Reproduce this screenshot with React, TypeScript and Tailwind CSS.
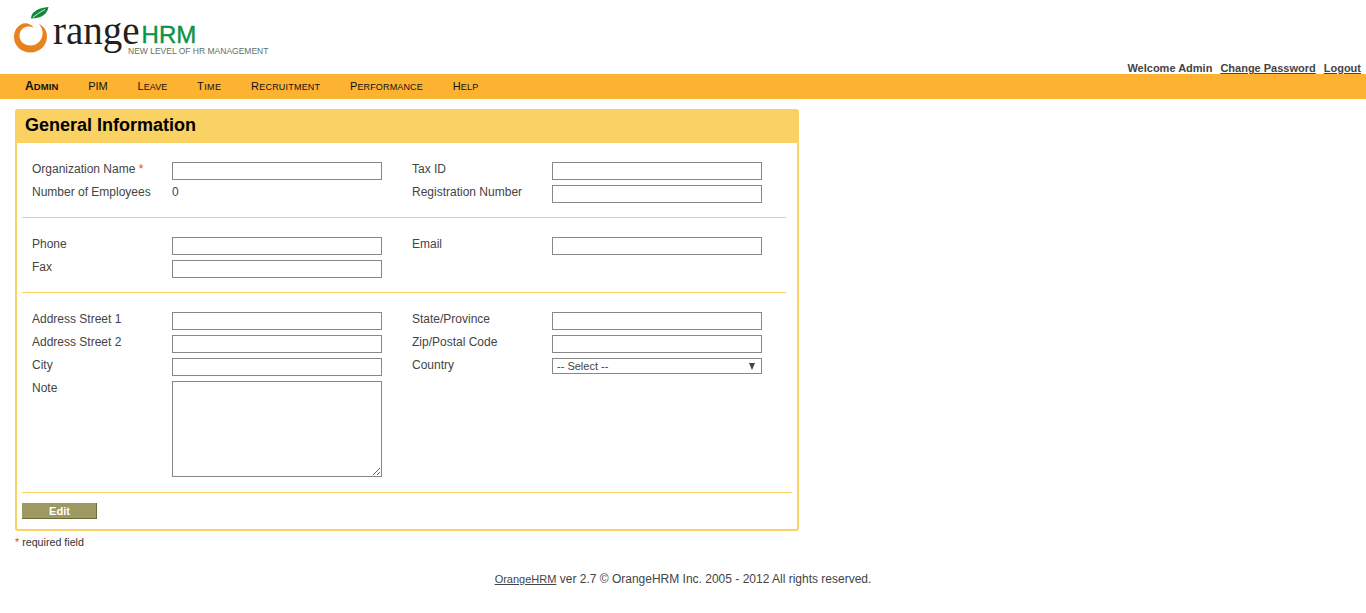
const sans = "font-['Liberation_Sans',Arial,sans-serif]";

const navItems = [
  { name: 'Admin', style: 'font-bold uppercase text-[9.5px] first-letter:text-[12px] tracking-[0.1px]' },
  { name: 'PIM', style: 'text-[11px]' },
  { name: 'Leave', style: 'uppercase text-[9px] first-letter:text-[11px] tracking-[0.1px]' },
  { name: 'Time', style: 'uppercase text-[9px] first-letter:text-[11px] tracking-[0.4px]' },
  { name: 'Recruitment', style: 'uppercase text-[9px] first-letter:text-[11px] tracking-[0.2px]' },
  { name: 'Performance', style: 'uppercase text-[9px] first-letter:text-[11px] tracking-[0.15px]' },
  { name: 'Help', style: 'uppercase text-[9px] first-letter:text-[11px] tracking-[0.25px]' },
];

const Logo = () => {
  return (
    <div className="flex pl-[14px] pt-[7px]">
      <svg width="36" height="48" viewBox="14 7 36 48" className="shrink-0">
        <path
          fill="#e8821e"
          fillRule="evenodd"
          d="M23 23.500C17.500 25.500 14 30.500 14 37c0 9 7.500 15.500 16.500 15.500S47 45.500 47 36.500c0-6-3.500-10.500-8-12.500 2.500 3 4 6.500 3.500 10.500-.6 6-5.500 11-12 11S19.500 41 19.500 36c0-5.500 4-9.500 9-9.500 2 0 4 .5 5.500 1.500-2-2.500-5.500-5.500-11-4.500z"
        />
        <path fill="#0f8a3c" d="M31 18.500C31 12 38 8 48.500 7 47.500 13 43 18.500 31 18.500z" />
        <path fill="none" stroke="#fff" strokeWidth="0.8" d="M33 17.500c4-3.500 8-6 12-8" />
      </svg>
      <div className="flex flex-col pl-[3px]">
        <div className="flex items-baseline mt-[6px] h-[33px]">
          <span className="font-['Liberation_Serif',serif] text-[39px] leading-[33px] text-[#231f20] translate-y-[1px]">range</span>
          <span className={`${sans} text-[24px] leading-[33px] text-[#0d9345] ml-[2px] [-webkit-text-stroke:0.4px_#0d9345]`}>
            HRM
          </span>
        </div>
        <span className={`${sans} text-[8.5px] leading-[10px] text-[#5f6f66] ml-[75px] whitespace-nowrap`}>
          NEW LEVEL OF HR MANAGEMENT
        </span>
      </div>
    </div>
  );
};

const Label = ({ text, required }: { text: string; required?: boolean }) => {
  return (
    <span className="w-[140px] shrink-0 text-[12px] leading-[14px] text-[#444]">
      {text}
      {required && <span className="text-[#e8433a]"> *</span>}
    </span>
  );
};

const TextInput = () => {
  return <input type="text" className="w-[210px] h-[18px] border border-[#888] bg-white" />;
};

const Row = ({ children }: { children: React.ReactNode }) => {
  return <div className="flex h-[18px] mb-[5px] last:mb-0">{children}</div>;
};

const Column = ({ children }: { children: React.ReactNode }) => {
  return <div className="w-[380px] shrink-0 flex flex-col">{children}</div>;
};

const Divider = ({ wide }: { wide?: boolean }) => {
  return <div className={`h-px ml-[5px] bg-[#fad163] ${wide ? 'w-[770px]' : 'w-[764px]'}`} />;
};

const App = () => {
  return (
    <div className={`${sans} w-full h-[613px] bg-white overflow-hidden`}>
      <header className="flex justify-between h-[74px]">
        <Logo />
        <div className="flex items-end gap-[8px] pr-[5px] text-[11px] font-bold leading-[13px] text-[#444] translate-y-[1px]">
          <span>Welcome Admin</span>
          <a className="underline">Change Password</a>
          <a className="underline">Logout</a>
        </div>
      </header>

      <nav className="flex items-center h-[25px] pl-[25px] pb-[1px] gap-[29.7px] bg-[#fdb231] text-[#111]">
        {navItems.map((item) => (
          <span key={item.name} className={item.style}>
            {item.name}
          </span>
        ))}
      </nav>

      <main className="w-[784px] ml-[15px] mt-[10px] border-2 border-[#fad163] rounded-[3px] bg-white">
        <div className="flex items-center h-[33px] -mt-px pl-[8px] pb-[3px] bg-[#fad163] text-[18px] font-bold text-black">
          General Information
        </div>

        <section className="flex pl-[15px] pt-[19px] pb-[14px]">
          <Column>
            <Row>
              <Label text="Organization Name" required />
              <TextInput />
            </Row>
            <Row>
              <Label text="Number of Employees" />
              <span className="text-[12px] leading-[14px] text-[#444]">0</span>
            </Row>
          </Column>
          <Column>
            <Row>
              <Label text="Tax ID" />
              <TextInput />
            </Row>
            <Row>
              <Label text="Registration Number" />
              <TextInput />
            </Row>
          </Column>
        </section>
        <Divider />

        <section className="flex pl-[15px] pt-[19px] pb-[14px]">
          <Column>
            <Row>
              <Label text="Phone" />
              <TextInput />
            </Row>
            <Row>
              <Label text="Fax" />
              <TextInput />
            </Row>
          </Column>
          <Column>
            <Row>
              <Label text="Email" />
              <TextInput />
            </Row>
          </Column>
        </section>
        <Divider />

        <section className="flex pl-[15px] pt-[19px] pb-[15px]">
          <Column>
            <Row>
              <Label text="Address Street 1" />
              <TextInput />
            </Row>
            <Row>
              <Label text="Address Street 2" />
              <TextInput />
            </Row>
            <Row>
              <Label text="City" />
              <TextInput />
            </Row>
            <div className="flex">
              <Label text="Note" />
              <textarea className="block w-[210px] h-[96px] border border-[#888] bg-white" />
            </div>
          </Column>
          <Column>
            <Row>
              <Label text="State/Province" />
              <TextInput />
            </Row>
            <Row>
              <Label text="Zip/Postal Code" />
              <TextInput />
            </Row>
            <Row>
              <Label text="Country" />
              <div className="relative w-[210px] h-[16px]">
                <select className="block w-full h-full appearance-none border border-[#888] bg-white pl-[4px] text-[11px] leading-[14px] text-[#444]">
                  <option>-- Select --</option>
                </select>
                <span className="absolute right-[7px] top-[5px] w-0 h-0 border-x-[3.5px] border-x-transparent border-t-[7px] border-t-[#444]" />
              </div>
            </Row>
          </Column>
        </section>
        <Divider wide />

        <div className="pl-[5px] pt-[10px] pb-[10px]">
          <button className="block w-[75px] h-[16px] pl-[1px] border-r border-b border-[#6b6b35] border-t-[#b5b585] bg-[#9c9a62] text-[11px] font-bold leading-[14px] text-white">
            Edit
          </button>
        </div>
      </main>

      <p className="ml-[15px] mt-[5px] text-[10.7px] leading-[13px] text-[#333]">
        <span className="text-[#e8433a]">*</span> required field
      </p>

      <footer className="mt-[23px] text-center text-[12px] leading-[14px] text-[#444]">
        <a className="underline text-[11px]">OrangeHRM</a> ver 2.7 © OrangeHRM Inc. 2005 - 2012 All rights reserved.
      </footer>
    </div>
  );
};

export default App;
